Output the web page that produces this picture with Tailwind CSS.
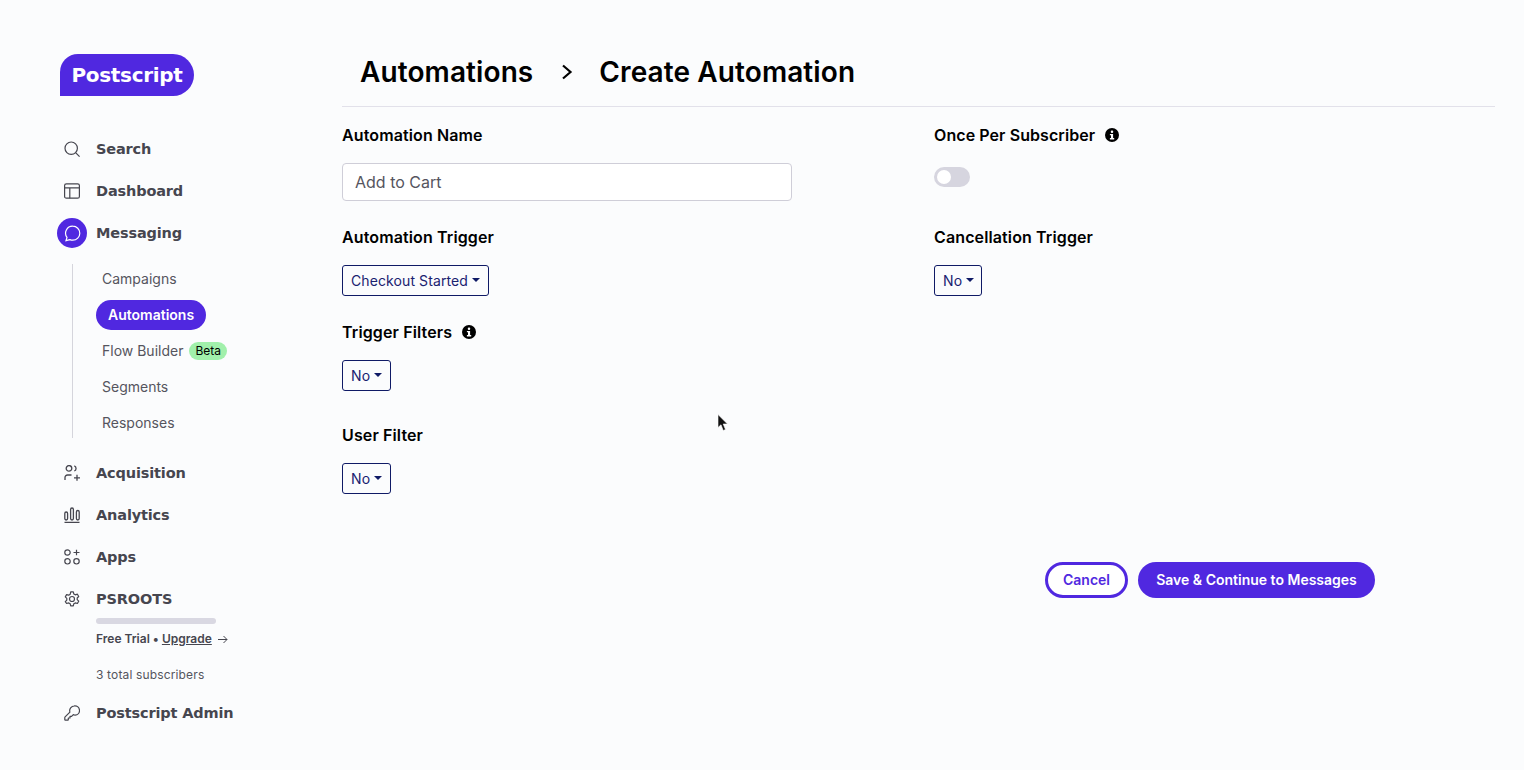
<!DOCTYPE html>
<html lang="en">
<head>
    <meta charset="UTF-8">
    <title>Create Automation</title>
    <script src="https://cdn.jsdelivr.net/npm/@tailwindcss/browser@4"></script>
</head>
<body class="bg-[#fbfcfd] font-['Inter',sans-serif] text-black overflow-hidden">
    <div class="relative flex h-[770px] w-[1524px]">
        <!-- sidebar -->
        <aside class="w-[342px] shrink-0 pl-[60px] pt-[54px]">
            <div class="flex h-[42px] w-[134px] items-center justify-center rounded-[21px] rounded-bl-none rounded-tl-[18px] bg-[#5028e0] font-bold text-white font-['DejaVu_Sans',sans-serif]">
                <span class="text-[20px] tracking-[-0.3px]">Postscript</span>
            </div>

            <nav class="mt-[32px] font-['DejaVu_Sans',sans-serif] text-[14.5px] font-bold leading-[23px] tracking-[-0.15px] text-[#46464f]">
                <a class="flex h-[42px] items-center">
                    <svg class="ml-[4px] mr-[16px] h-[16px] w-[16px]" viewBox="0 0 16 16" fill="none" stroke="#46464f" stroke-width="1.2"><circle cx="7.2" cy="7.2" r="6.2"/><path d="M11.8 11.8 15.6 15.6"/></svg>
                    Search
                </a>
                <a class="flex h-[42px] items-center">
                    <svg class="ml-[4px] mr-[16px] h-[16px] w-[16px]" viewBox="0 0 16 16" fill="none" stroke="#46464f" stroke-width="1.2"><rect x="0.6" y="0.8" width="14.8" height="14.4" rx="1.8"/><path d="M0.6 4.8H15.4M5.8 4.8V15.2"/></svg>
                    Dashboard
                </a>
                <a class="flex h-[42px] items-center">
                    <span class="-ml-[3px] mr-[9px] flex h-[30px] w-[30px] items-center justify-center rounded-full bg-[#5028e0]">
                        <svg class="h-[17px] w-[17px]" viewBox="0 0 17 17" fill="none" stroke="#fff" stroke-width="1.2"><path d="M8.8 1.2a7 7 0 0 1 0 14c-1 0-2-.2-2.900-.6L2 15.600l1-3.200A7 7 0 0 1 8.800 1.200z"/></svg>
                    </span>
                    Messaging
                </a>

                <div class="ml-[12px] mt-[10px] flex h-[174px] flex-col border-l border-[#d5d5dc] pl-[23px] font-['Inter',sans-serif] text-[14px] font-normal leading-[20px] tracking-normal text-[#55555e]">
                    <a class="-mt-[3px] flex h-[36px] shrink-0 items-center pb-[1px] pl-[6px]">Campaigns</a>
                    <a class="flex h-[36px] shrink-0 items-center">
                        <span class="flex h-[30px] items-center rounded-full bg-[#5028e0] px-[12px] pb-[1px] font-semibold text-white">Automations</span>
                    </a>
                    <a class="flex h-[36px] shrink-0 items-center pl-[6px]">
                        <span class="pb-[1px]">Flow Builder</span>
                        <span class="ml-[6px] flex h-[18px] items-center rounded-full bg-[#a1f0ab] px-[6px] text-[12px] text-black">Beta</span>
                    </a>
                    <a class="flex h-[36px] shrink-0 items-center pb-[1px] pl-[6px]">Segments</a>
                    <a class="flex h-[36px] shrink-0 items-center pb-[1px] pl-[6px]">Responses</a>
                </div>

                <a class="mt-[14px] flex h-[42px] items-center">
                    <svg class="ml-[4px] mr-[16px] h-[16px] w-[16px]" viewBox="0 0 16 16" fill="none" stroke="#46464f" stroke-width="1.3"><circle cx="5" cy="3.400" r="2.800"/><path d="M10.300.8a2.800 2.800 0 0 1 0 5.200M7.500 10H3.500A2.500 2.500 0 0 0 1 12.500V15M10 12.800h6M13 9.800v6"/></svg>
                    Acquisition
                </a>
                <a class="flex h-[42px] items-center">
                    <svg class="ml-[4px] mr-[16px] h-[16px] w-[16px]" viewBox="0 0 16 16" fill="none" stroke="#46464f" stroke-width="1.3"><rect x="0.800" y="5" width="2.800" height="8" rx="1.400"/><rect x="6.600" y="1" width="2.800" height="12" rx="1.400"/><rect x="12.400" y="3.500" width="2.800" height="9.500" rx="1.400"/><path d="M0.500 15.400H15.500"/></svg>
                    Analytics
                </a>
                <a class="flex h-[42px] items-center">
                    <svg class="ml-[4px] mr-[16px] h-[16px] w-[16px]" viewBox="0 0 16 16" fill="none" stroke="#46464f" stroke-width="1.2"><circle cx="3.500" cy="3.500" r="2.700"/><circle cx="3.500" cy="12.300" r="2.700"/><circle cx="12.500" cy="12.300" r="2.700"/><path d="M9.500 3.500h6M12.500 .8v5.400"/></svg>
                    Apps
                </a>
                <a class="flex h-[42px] items-center">
                    <svg class="ml-[4px] mr-[16px] h-[16px] w-[16px]" viewBox="0 0 16 16" fill="none" stroke="#46464f" stroke-width="1.2"><circle cx="8" cy="8" r="2.500"/><path d="M6.700 .8h2.600l.5 2.100 1.500.9 2.100-.6 1.300 2.300-1.500 1.500v1.700l1.500 1.500-1.300 2.300-2.100-.6-1.500.9-.5 2.100H6.700l-.5-2.100-1.500-.9-2.100.6L1.300 10.600l1.500-1.500V7.400L1.300 5.900l1.300-2.300 2.100.6 1.500-.9z" stroke-linejoin="round"/></svg>
                    PSROOTS
                </a>

                <div class="-mt-[2px] pl-[36px] font-['Inter',sans-serif] leading-[18px] tracking-normal">
                    <div class="h-[6px] w-[120px] rounded-full bg-[#d9d8e2]"></div>
                    <p class="mt-[6px] flex h-[18px] items-center text-[12px] font-semibold">
                        Free Trial •&nbsp;<span class="underline">Upgrade</span>
                        <svg class="ml-[6px] h-[9px] w-[10px]" viewBox="0 0 10 9" fill="none" stroke="#46464f" stroke-width="1"><path d="M0 4.500H9M5.500 1 9 4.500 5.500 8"/></svg>
                    </p>
                    <p class="mt-[18px] flex h-[18px] items-center text-[12px] font-normal tracking-[0.15px] text-[#55555e]">3 total subscribers</p>
                </div>

                <a class="mt-[8px] flex h-[42px] items-center">
                    <svg class="ml-[4px] mr-[16px] h-[16px] w-[16px]" viewBox="0 0 16 16" fill="none" stroke="#46464f" stroke-width="1.2" stroke-linejoin="round"><path d="M10.500.8a4.700 4.700 0 0 1 .6 9.400L9.300 9.600 7.600 11.300H6v1.700H4.300v1.700a1 1 0 0 1-.5.500H1.300a.6.600 0 0 1-.5-.5v-2.200a1 1 0 0 1 .3-.6l4.800-4.800a4.700 4.700 0 0 1 4.600-6.100z"/></svg>
                    Postscript Admin
                </a>
            </nav>
        </aside>

        <!-- main -->
        <main class="w-[1153px] shrink-0">
            <header class="flex h-[107px] items-center border-b border-[#e2e1ea] pl-[18px] pt-[38px] text-[28px] font-semibold leading-none tracking-[0.1px]">
                <h1>Automations</h1>
                <svg class="ml-[28px] mr-[26px] h-[16px] w-[12px]" viewBox="0 0 12 16" fill="none" stroke="#000" stroke-width="2.200"><path d="M2 1.500 9.500 8 2 14.500"/></svg>
                <h1>Create Automation</h1>
            </header>

            <div class="grid grid-cols-[592px_1fr] text-[16px]">
                <div>
                    <label class="mt-[18px] flex h-[20px] items-center font-semibold tracking-[0.12px]">Automation Name</label>
                    <div class="mt-[18px] flex h-[38px] w-[450px] items-center rounded-[4px] border border-[#cfced8] bg-white pl-[12px] text-[#55555e]">Add to Cart</div>

                    <label class="mt-[26px] flex h-[20px] items-center font-semibold tracking-[0.12px]">Automation Trigger</label>
                    <button class="mt-[18px] flex h-[31px] items-center rounded-[3px] border border-[#0f1a66] px-[8px] text-[14px] tracking-[0.1px] text-[#1a2270]">
                        Checkout Started<span class="ml-[4px] mb-[2px] h-0 w-0 border-x-[4.500px] border-t-[4.500px] border-x-transparent border-t-[#0f1a66]"></span>
                    </button>

                    <label class="mt-[26px] flex h-[20px] items-center font-semibold tracking-[0.12px]">
                        Trigger Filters
                        <svg class="ml-[10px] h-[14px] w-[14px]" viewBox="0 0 14 14"><circle cx="7" cy="7" r="7" fill="#000"/><rect x="5.800" y="2.500" width="2.400" height="2.400" rx="1" fill="#fbfcfd"/><path d="M4.900 5.900H8.100V10H9.200V11.400H4.900V10H6V7.300H4.900z" fill="#fbfcfd"/></svg>
                    </label>
                    <button class="mt-[18px] flex h-[31px] items-center rounded-[3px] border border-[#0f1a66] px-[8px] text-[14px] tracking-[0.1px] text-[#1a2270]">
                        No<span class="ml-[4px] mb-[2px] h-0 w-0 border-x-[4.500px] border-t-[4.500px] border-x-transparent border-t-[#0f1a66]"></span>
                    </button>

                    <label class="mt-[34px] flex h-[20px] items-center font-semibold tracking-[0.12px]">User Filter</label>
                    <button class="mt-[18px] flex h-[31px] items-center rounded-[3px] border border-[#0f1a66] px-[8px] text-[14px] tracking-[0.1px] text-[#1a2270]">
                        No<span class="ml-[4px] mb-[2px] h-0 w-0 border-x-[4.500px] border-t-[4.500px] border-x-transparent border-t-[#0f1a66]"></span>
                    </button>
                </div>

                <div>
                    <label class="mt-[18px] flex h-[20px] items-center font-semibold tracking-[0.08px]">
                        Once Per Subscriber
                        <svg class="ml-[10px] h-[14px] w-[14px]" viewBox="0 0 14 14"><circle cx="7" cy="7" r="7" fill="#000"/><rect x="5.800" y="2.500" width="2.400" height="2.400" rx="1" fill="#fbfcfd"/><path d="M4.900 5.900H8.100V10H9.200V11.400H4.900V10H6V7.300H4.900z" fill="#fbfcfd"/></svg>
                    </label>
                    <div class="mt-[22px] flex h-[20px] w-[36px] items-center rounded-full bg-[#d6d5df] pl-[3px]">
                        <span class="h-[14px] w-[14px] rounded-full bg-white"></span>
                    </div>
                    <label class="mt-[40px] flex h-[20px] items-center font-semibold tracking-[0.12px]">Cancellation Trigger</label>
                    <button class="mt-[18px] flex h-[31px] w-[48px] items-center rounded-[3px] border border-[#0f1a66] pl-[8px] text-[14px] tracking-[0.1px] text-[#1a2270]">
                        No<span class="ml-[4px] mb-[2px] h-0 w-0 border-x-[4.500px] border-t-[4.500px] border-x-transparent border-t-[#0f1a66]"></span>
                    </button>
                </div>
            </div>

            <div class="mt-[68px] flex w-[1033px] justify-end gap-[10px] text-[14px] font-semibold">
                <button class="h-[36px] w-[83px] rounded-full border-[3px] border-[#5028e0] bg-white pb-[1px] text-[#5028e0]">Cancel</button>
                <button class="h-[36px] w-[237px] rounded-full bg-[#5028e0] pb-[1px] text-white">Save &amp; Continue to Messages</button>
            </div>
        </main>

        <!-- mouse pointer captured in the screenshot -->
        <svg class="absolute left-[717px] top-[414px] h-[18px] w-[12px]" viewBox="0 0 12 18"><path d="M1 .5V13.500L4 10.800 6.200 16.500 8.500 15.500 6.200 10H10.500z" fill="#111" stroke="#fff" stroke-width=".6"/></svg>
    </div>
</body>
</html>
